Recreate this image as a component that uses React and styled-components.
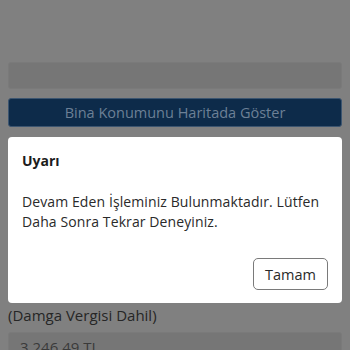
import React from "react";
import styled, { createGlobalStyle } from "styled-components";

const Global = createGlobalStyle`
  html, body { margin: 0; padding: 0; background: #808080; }
  body { font-family: "Open Sans", "Noto Sans", sans-serif; overflow: hidden; }
  * { box-sizing: border-box; }
`;

const Page = styled.div`
  width: 350px;
  height: 350px;
  padding: 62px 8px 0;
  display: flex;
  flex-direction: column;
  background: #808080;
  position: relative;
  overflow: hidden;
`;

const Field = styled.div`
  height: ${(p) => p.$h}px;
  background: #767676;
  border: 1px solid #7a7a7a;
  border-radius: 3px;
  padding: 4px 11px;
  font-size: 15px;
  color: #3a3a3a;
  flex-shrink: 0;
`;

const MapButton = styled.div`
  margin-top: 9px;
  height: 29px;
  background: #0d2b4a;
  border: 1px solid #3c5570;
  border-radius: 3px;
  display: flex;
  align-items: center;
  justify-content: center;
  color: #6c8096;
  font-size: 14.5px;
  flex-shrink: 0;
`;

const Spacer = styled.div`
  height: ${(p) => p.$h}px;
  flex-shrink: 0;
`;

const Label = styled.div`
  font-size: 15px;
  color: #262626;
  height: 28px;
  line-height: 22px;
  flex-shrink: 0;
`;

const Dialog = styled.div`
  position: absolute;
  left: 8px;
  top: 137px;
  width: 334px;
  height: 166px;
  background: #ffffff;
  border-radius: 4px;
  padding: 13px 12px 13px 14px;
  display: flex;
  flex-direction: column;
`;

const Title = styled.div`
  font-size: 14px;
  font-weight: 700;
  color: #1c1c1c;
  line-height: 20px;
  margin-top: 1px;
`;

const Body = styled.div`
  margin-top: 21px;
  font-size: 14px;
  line-height: 20px;
  color: #2a2a2a;
  letter-spacing: 0.1px;
`;

const Actions = styled.div`
  margin-top: auto;
  display: flex;
  justify-content: flex-end;
  padding-right: 2px;
`;

const OkButton = styled.button`
  width: 75px;
  height: 32px;
  border: 1px solid #7a7a7a;
  border-radius: 5px;
  background: #fff;
  font-family: inherit;
  font-size: 14.5px;
  color: #2a2a2a;
`;

export default function App() {
  return (
    <>
      <Global />
      <Page>
        <Field $h={27} />
        <MapButton>Bina Konumunu Haritada Göster</MapButton>
        <Spacer $h={177} />
        <Label>(Damga Vergisi Dahil)</Label>
        <Field $h={40}>3.246,49 TL</Field>
        <Dialog>
          <Title>Uyarı</Title>
          <Body>
            Devam Eden İşleminiz Bulunmaktadır. Lütfen Daha Sonra Tekrar Deneyiniz.
          </Body>
          <Actions>
            <OkButton>Tamam</OkButton>
          </Actions>
        </Dialog>
      </Page>
    </>
  );
}
